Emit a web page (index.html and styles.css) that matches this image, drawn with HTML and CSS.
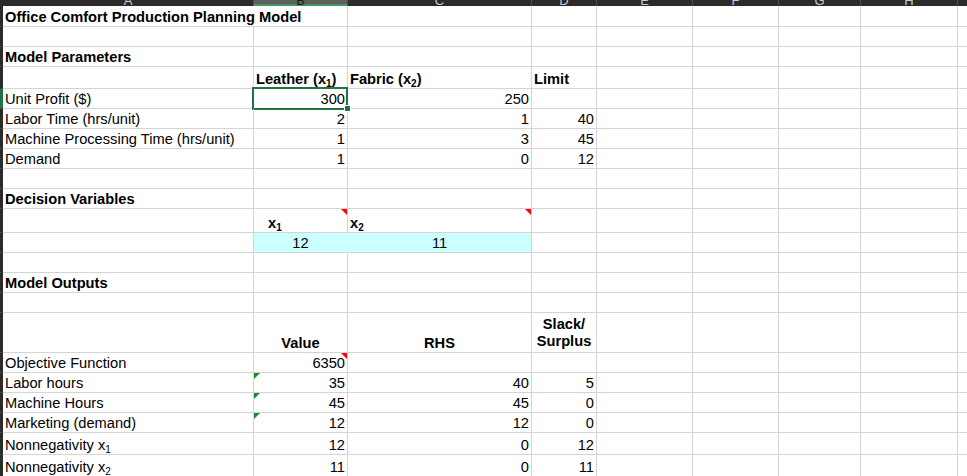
FILE: index.html
```html
<!DOCTYPE html>
<html lang="en">
<head>
    <meta charset="UTF-8">
    <meta name="viewport" content="width=device-width, initial-scale=1.0">
    <title>Office Comfort Production Planning Model</title>
    <link rel="stylesheet" href="styles.css">
</head>
<body>
    <table class="sheet">
        <colgroup>
            <col class="w-rh">
            <col class="w-a">
            <col class="w-b">
            <col class="w-c">
            <col class="w-d">
            <col class="w-e">
            <col class="w-f">
            <col class="w-g">
            <col class="w-h">
            <col class="w-i">
        </colgroup>

        <!-- column headers, mostly scrolled out of view -->
        <tr class="colhead">
            <td class="corner"></td>
            <td><div class="letter"><span>A</span></div></td>
            <td class="active"><div class="letter"><span>B</span></div></td>
            <td><div class="letter"><span>C</span></div></td>
            <td><div class="letter"><span>D</span></div></td>
            <td><div class="letter"><span>E</span></div></td>
            <td><div class="letter"><span>F</span></div></td>
            <td><div class="letter"><span>G</span></div></td>
            <td><div class="letter"><span>H</span></div></td>
            <td><div class="letter"><span>I</span></div></td>
        </tr>

        <tr class="h21">
            <td class="rh"></td>
            <td class="b" colspan="2">Office Comfort Production Planning Model</td>
            <td></td><td></td><td></td><td></td><td></td><td></td><td></td>
        </tr>
        <tr class="h20">
            <td class="rh"></td>
            <td></td><td></td><td></td><td></td><td></td><td></td><td></td><td></td><td></td>
        </tr>
        <tr class="h20">
            <td class="rh"></td>
            <td class="b">Model Parameters</td>
            <td></td><td></td><td></td><td></td><td></td><td></td><td></td><td></td>
        </tr>
        <tr class="h22">
            <td class="rh"></td>
            <td></td>
            <td class="b">Leather (x<sub>1</sub>)</td>
            <td class="b">Fabric (x<sub>2</sub>)</td>
            <td class="b">Limit</td>
            <td></td><td></td><td></td><td></td><td></td>
        </tr>
        <tr class="h20">
            <td class="rh on"></td>
            <td>Unit Profit ($)</td>
            <td class="num sel">300</td>
            <td class="num">250</td>
            <td></td>
            <td></td><td></td><td></td><td></td><td></td>
        </tr>
        <tr class="h20">
            <td class="rh"></td>
            <td>Labor Time (hrs/unit)</td>
            <td class="num">2</td>
            <td class="num">1</td>
            <td class="num">40</td>
            <td></td><td></td><td></td><td></td><td></td>
        </tr>
        <tr class="h20">
            <td class="rh"></td>
            <td>Machine Processing Time (hrs/unit)</td>
            <td class="num">1</td>
            <td class="num">3</td>
            <td class="num">45</td>
            <td></td><td></td><td></td><td></td><td></td>
        </tr>
        <tr class="h20">
            <td class="rh"></td>
            <td>Demand</td>
            <td class="num">1</td>
            <td class="num">0</td>
            <td class="num">12</td>
            <td></td><td></td><td></td><td></td><td></td>
        </tr>
        <tr class="h20">
            <td class="rh"></td>
            <td></td><td></td><td></td><td></td><td></td><td></td><td></td><td></td><td></td>
        </tr>
        <tr class="h20">
            <td class="rh"></td>
            <td class="b">Decision Variables</td>
            <td></td><td></td><td></td><td></td><td></td><td></td><td></td><td></td>
        </tr>
        <tr class="h24">
            <td class="rh"></td>
            <td></td>
            <td class="b indent note">x<sub>1</sub></td>
            <td class="b note">x<sub>2</sub></td>
            <td></td><td></td><td></td><td></td><td></td><td></td>
        </tr>
        <tr class="h20">
            <td class="rh"></td>
            <td></td>
            <td class="ctr cyan join">12</td>
            <td class="ctr cyan">11</td>
            <td></td><td></td><td></td><td></td><td></td><td></td>
        </tr>
        <tr class="h20">
            <td class="rh"></td>
            <td></td><td></td><td></td><td></td><td></td><td></td><td></td><td></td><td></td>
        </tr>
        <tr class="h20">
            <td class="rh"></td>
            <td class="b">Model Outputs</td>
            <td></td><td></td><td></td><td></td><td></td><td></td><td></td><td></td>
        </tr>
        <tr class="h20">
            <td class="rh"></td>
            <td></td><td></td><td></td><td></td><td></td><td></td><td></td><td></td><td></td>
        </tr>
        <tr class="h40">
            <td class="rh"></td>
            <td></td>
            <td class="b ctr">Value</td>
            <td class="b ctr">RHS</td>
            <td class="b ctr wrap">Slack/<br>Surplus</td>
            <td></td><td></td><td></td><td></td><td></td>
        </tr>
        <tr class="h20">
            <td class="rh"></td>
            <td>Objective Function</td>
            <td class="num note">6350</td>
            <td></td>
            <td></td>
            <td></td><td></td><td></td><td></td><td></td>
        </tr>
        <tr class="h20">
            <td class="rh"></td>
            <td>Labor hours</td>
            <td class="num warn">35</td>
            <td class="num">40</td>
            <td class="num">5</td>
            <td></td><td></td><td></td><td></td><td></td>
        </tr>
        <tr class="h20">
            <td class="rh"></td>
            <td>Machine Hours</td>
            <td class="num warn">45</td>
            <td class="num">45</td>
            <td class="num">0</td>
            <td></td><td></td><td></td><td></td><td></td>
        </tr>
        <tr class="h20">
            <td class="rh"></td>
            <td>Marketing (demand)</td>
            <td class="num warn">12</td>
            <td class="num">12</td>
            <td class="num">0</td>
            <td></td><td></td><td></td><td></td><td></td>
        </tr>
        <tr class="h22">
            <td class="rh"></td>
            <td>Nonnegativity x<sub>1</sub></td>
            <td class="num">12</td>
            <td class="num">0</td>
            <td class="num">12</td>
            <td></td><td></td><td></td><td></td><td></td>
        </tr>
        <tr class="h22">
            <td class="rh"></td>
            <td>Nonnegativity x<sub>2</sub></td>
            <td class="num">11</td>
            <td class="num">0</td>
            <td class="num">11</td>
            <td></td><td></td><td></td><td></td><td></td>
        </tr>
    </table>
</body>
</html>
```

FILE: styles.css
```css
body {
    margin: 0;
    overflow: hidden;
    background-color: #fff;
    color: #000;
    font-family: "Liberation Sans", Arial, sans-serif;
    font-size: 14.67px;
}

.sheet {
    border-collapse: separate;
    border-spacing: 0;
    table-layout: fixed;
    width: 1078px;
}

.w-rh { width: 3px; }
.w-a { width: 251px; }
.w-b { width: 94px; }
.w-c { width: 184px; }
.w-d { width: 65px; }
.w-e { width: 96px; }
.w-f { width: 86px; }
.w-g { width: 82px; }
.w-h { width: 97px; }
.w-i { width: 120px; }

.sheet td {
    position: relative;
    box-sizing: border-box;
    padding: 0 2px;
    border-right: 1px solid #d4d4d4;
    border-bottom: 1px solid #d4d4d4;
    vertical-align: bottom;
    line-height: 17px;
    white-space: nowrap;
}

.h20 { height: 20px; }
.h21 { height: 21px; }
.h22 { height: 22px; }
.h24 { height: 24px; }
.h40 { height: 40px; }

/* column header strip */
.colhead { height: 6px; }

.colhead td {
    height: 6px;
    padding: 0;
    background-color: #2b2b2b;
    border-right: 1px solid #4d4d4d;
    border-bottom: none;
    color: #c8c8c8;
    font-size: 13px;
}

.colhead td.corner {
    border-right: none;
}

.colhead td.active {
    background-color: #5f5f5f;
    color: #1c1c1c;
    box-shadow: inset 0 -2px 0 #3c9a5f;
}

.letter {
    height: 6px;
    overflow: hidden;
    display: flex;
    align-items: flex-end;
    justify-content: center;
}

.letter span {
    line-height: 13px;
    margin-bottom: -1px;
}

/* row header strip */
.sheet td.rh {
    padding: 0;
    background-color: #2b2b2b;
    border-right: none;
    border-bottom: 1px solid #454545;
}

.sheet td.rh.on {
    background-color: #217346;
}

.b { font-weight: bold; }
.num { text-align: right; }
.ctr { text-align: center; }

.sheet td.indent { padding-left: 14px; }

.sheet td.wrap {
    white-space: normal;
    padding-bottom: 2px;
}

.sheet td.cyan {
    background-color: #ccffff;
}

.sheet td.join {
    border-right-color: #ccffff;
}

sub {
    font-size: 10px;
    line-height: 0;
    vertical-align: -3px;
}

/* comment and error markers */
.note::after {
    content: "";
    position: absolute;
    top: 0;
    right: 0;
    border-top: 6px solid #f00;
    border-left: 6px solid transparent;
}

.warn::before {
    content: "";
    position: absolute;
    top: 0;
    left: 0;
    border-top: 6px solid #1e8a2e;
    border-right: 6px solid transparent;
}

/* selected cell */
.sel::before {
    content: "";
    position: absolute;
    top: -2px;
    left: -2px;
    right: -1px;
    bottom: -2px;
    border: 2px solid #217346;
}

.sel::after {
    content: "";
    position: absolute;
    right: -4px;
    bottom: -4px;
    width: 5px;
    height: 5px;
    background-color: #217346;
    border: 1px solid #fff;
    z-index: 1;
}
```
